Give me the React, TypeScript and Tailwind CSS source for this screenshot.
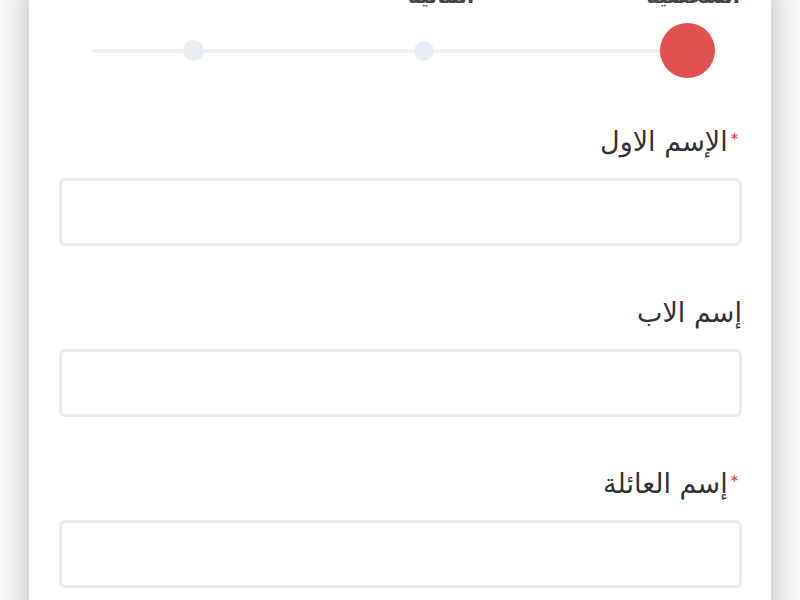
import React from "react";

const fields = [
  { label: "الإسم الاول", required: true },
  { label: "إسم الاب", required: false },
  { label: "إسم العائلة", required: true },
];

export default function App() {
  return (
    <div className="h-[600px] w-full overflow-hidden bg-[#f9f9f9]" style={{ fontFamily: '"DejaVu Sans", sans-serif' }}>
      <div className="mx-[29px] h-[700px] bg-white shadow-[0_0_28px_rgba(0,0,0,0.28)] pl-[30px] pr-[29px]">
        <div className="-mt-[17px] flex h-[141px] flex-col">
          <div className="flex h-[26px] items-start pl-[349px] text-[21px] leading-[26px] font-bold text-[#444]">
            <span>المالية</span>
            <span className="ml-auto pr-[2px]">الشخصية</span>
          </div>
          <div className="relative mt-[14px] flex items-center pl-[124px]">
            <div className="absolute left-[33px] right-[50px] top-1/2 h-[4px] -translate-y-1/2 rounded-full bg-[#eef2f7]" />
            <div className="relative h-[21px] w-[21px] rounded-full bg-[#e8eef5]" />
            <div className="relative ml-[210px] h-[20px] w-[20px] rounded-full bg-[#e8eef5]" />
            <div className="relative ml-[226px] h-[55px] w-[55px] rounded-full bg-[#e25151]" />
          </div>
        </div>
        {fields.map((f) => (
          <div key={f.label} dir="rtl" className="mb-[49px] flex flex-col gap-[18px]">
            <div className={`flex h-[36px] items-center text-[27px] leading-[36px] text-[#333] ${f.required ? "pr-[4px]" : "pr-0"}`}>
              {f.required && <span className="ml-[3px] self-start pt-[6px] text-[14px] leading-[16px] font-bold text-[#e25151]">*</span>}
              <span>{f.label}</span>
            </div>
            <input className="block h-[68px] w-full rounded-[6px] border-[3px] border-[#ebebeb] bg-white outline-none" />
          </div>
        ))}
      </div>
    </div>
  );
}
